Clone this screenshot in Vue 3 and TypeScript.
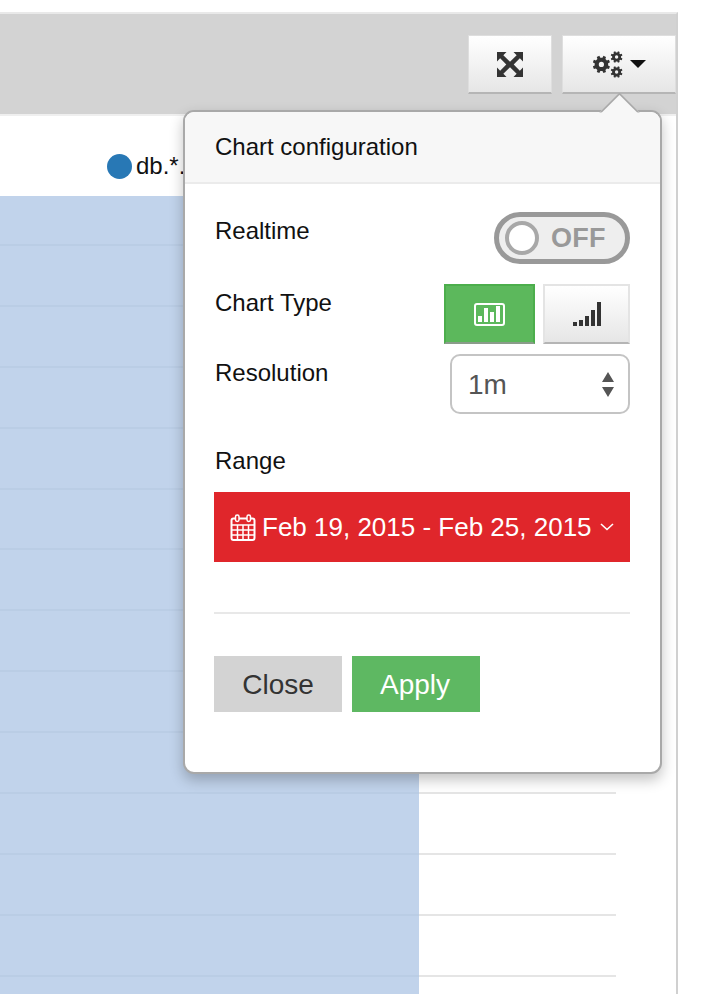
<script setup lang="ts">
const gridRows = 13;

// outline of a cog, teeth is the tooth count
function cog(cx: number, cy: number, outer: number, inner: number, hole: number, teeth: number): string {
  const pts: string[] = [];
  const step = (Math.PI * 2) / teeth;
  for (let i = 0; i < teeth; i++) {
    const a = i * step + step / 2;
    const corners: [number, number][] = [
      [inner, a - step * 0.3],
      [outer, a - step * 0.2],
      [outer, a + step * 0.2],
      [inner, a + step * 0.3],
    ];
    for (const [r, t] of corners) {
      pts.push(`${(cx + r * Math.cos(t)).toFixed(2)} ${(cy + r * Math.sin(t)).toFixed(2)}`);
    }
  }
  const ring = `M${cx - hole} ${cy}a${hole} ${hole} 0 1 0 ${hole * 2} 0a${hole} ${hole} 0 1 0 ${-hole * 2} 0Z`;
  return `M${pts.join("L")}Z${ring}`;
}

const gearPath = [
  cog(8.4, 13.4, 8.8, 6.8, 2.6, 8),
  cog(23.6, 6, 6, 4.5, 1.7, 8),
  cog(23.6, 21, 6, 4.5, 1.7, 8),
].join("");

const signalBars = [
  { x: 0, h: 4 },
  { x: 6, h: 6 },
  { x: 12, h: 10 },
  { x: 18, h: 16 },
  { x: 24, h: 24 },
];
</script>

<template>
  <div class="page">
    <section class="panel">
      <header class="panel-head">
        <button class="tool tool-expand" type="button" aria-label="Fullscreen">
          <svg width="26" height="25" viewBox="0 0 26 25">
            <path d="M0 0H9.500L6.350 3.150L13 9.800L19.650 3.150L16.500 0H26V9.500L22.850 6.350L16.700 12.500L22.850 18.650L26 15.500V25H16.500L19.650 21.850L13 15.200L6.350 21.850L9.500 25H0V15.500L3.150 18.650L9.300 12.500L3.150 6.350L0 9.500Z" fill="#333" />
          </svg>
        </button>
        <button class="tool tool-gear" type="button" aria-label="Settings">
          <svg width="30" height="27" viewBox="0 0 30 27">
            <path :d="gearPath" fill="#333" fill-rule="evenodd" />
          </svg>
          <span class="caret"></span>
        </button>
      </header>

      <div class="chart-legend">
        <span class="legend-dot"></span>
        <span>db.*.</span>
      </div>
      <div class="chart">
        <div class="bar">
          <div v-for="n in gridRows" :key="n" class="grid-row"></div>
        </div>
        <div v-for="n in gridRows" :key="n" class="grid-row"></div>
      </div>

      <aside class="popover">
        <div class="arrow"></div>
        <h3 class="pop-title">Chart configuration</h3>
        <div class="pop-body">
          <div class="row row-realtime">
            <label>Realtime</label>
            <div class="switch">
              <span class="knob"></span>
              <span class="off">OFF</span>
            </div>
          </div>
          <div class="row row-type">
            <label>Chart Type</label>
            <div class="type-group">
              <button class="type-btn on" type="button" aria-label="Bars">
                <svg width="31" height="23" viewBox="0 0 31 23">
                  <rect x="1" y="1" width="29" height="21" rx="2" fill="none" stroke="#fff" stroke-width="2" />
                  <path d="M4 13h4v6H4zM10 5h4v14h-4zM16 9h4v10h-4zM22 3h4v16h-4z" fill="#fff" />
                </svg>
              </button>
              <button class="type-btn" type="button" aria-label="Signal">
                <svg width="28" height="24" viewBox="0 0 28 24">
                  <rect v-for="b in signalBars" :key="b.x" :x="b.x" :y="24 - b.h" width="4" :height="b.h" fill="#333" />
                </svg>
              </button>
            </div>
          </div>
          <div class="row row-res">
            <label>Resolution</label>
            <div class="select">
              <span>1m</span>
              <svg width="12" height="25" viewBox="0 0 12 25">
                <path d="M6 0l6 10H0zM0 15h12L6 25z" fill="#555" />
              </svg>
            </div>
          </div>
          <label class="range-label">Range</label>
          <div class="range">
            <svg width="26" height="27" viewBox="0 0 26 27">
              <rect x="1.500" y="4.500" width="23" height="21.500" rx="2" fill="none" stroke="#fff" stroke-width="2" />
              <path d="M2 11h22M2 16h22M2 21h22M7.500 11V26M13 11V26M18.500 11V26" stroke="#fff" stroke-width="1.500" />
              <rect x="5.500" y="1" width="3.500" height="6.500" rx="1.700" fill="#e0262b" stroke="#fff" stroke-width="1.500" />
              <rect x="17" y="1" width="3.500" height="6.500" rx="1.700" fill="#e0262b" stroke="#fff" stroke-width="1.500" />
            </svg>
            <span>Feb 19, 2015 - Feb 25, 2015</span>
            <svg width="14" height="8" viewBox="0 0 14 8">
              <path d="M1 1l6 5.500L13 1" fill="none" stroke="#fff" stroke-width="1.600" />
            </svg>
          </div>
          <hr class="rule" />
          <div class="actions">
            <button class="act act-close" type="button">Close</button>
            <button class="act act-apply" type="button">Apply</button>
          </div>
        </div>
      </aside>
    </section>
  </div>
</template>

<style>
html, body { margin: 0; background: #fff; }
</style>

<style scoped>
.page {
  width: 720px;
  height: 994px;
  overflow: hidden;
  font-family: "Liberation Sans", Arial, sans-serif;
  color: #111;
  padding-top: 12px;
  box-sizing: border-box;
}
.panel {
  position: relative;
  width: 678px;
  height: 982px;
  box-sizing: border-box;
  border-top: 2px solid #e9e9e9;
  border-right: 2px solid #d0d0d0;
}
.panel-head {
  height: 100px;
  box-sizing: border-box;
  background: #d3d3d3;
  display: flex;
  justify-content: flex-end;
  gap: 10px;
  padding: 21px 0 0 0;
}
.tool {
  height: 59px;
  box-sizing: border-box;
  border: 1px solid #dedede;
  border-bottom: 2px solid #b5b5b5;
  background: linear-gradient(#fff, #e6e6e6);
  display: flex;
  align-items: center;
  justify-content: center;
  padding: 0;
}
.tool-expand { width: 84px; }
.tool-gear { width: 114px; gap: 7px; }
.caret {
  width: 0;
  height: 0;
  border-left: 8px solid transparent;
  border-right: 8px solid transparent;
  border-top: 8px solid #111;
}
.chart-legend {
  height: 82px;
  box-sizing: border-box;
  border-top: 2px solid #efefef;
  display: flex;
  align-items: center;
  padding: 20px 0 0 107px;
  font-size: 24px;
  gap: 4px;
}
.legend-dot {
  width: 25px;
  height: 25px;
  border-radius: 50%;
  background: #2878b5;
}
.chart {
  position: relative;
  width: 616px;
}
.bar {
  position: absolute;
  left: 0;
  top: 0;
  width: 419px;
  height: 800px;
  overflow: hidden;
  background: #c1d3eb;
}
.grid-row {
  height: 60.900px;
  box-sizing: border-box;
  border-bottom: 2px solid #e5e5e5;
}
.chart > .grid-row:nth-child(2),
.bar > .grid-row:first-child { height: 50px; }
.bar > .grid-row { border-bottom-color: #bacde5; }
.popover {
  position: absolute;
  left: 183px;
  top: 96px;
  width: 479px;
  height: 664px;
  box-sizing: border-box;
  background: #fff;
  border: 2px solid #a9a9a9;
  border-radius: 11px;
  box-shadow: 0 6px 14px rgba(0, 0, 0, 0.24);
}
.arrow {
  position: absolute;
  right: 26px;
  top: -14px;
  width: 27px;
  height: 27px;
  background: #f7f7f7;
  border-left: 2px solid #a9a9a9;
  border-top: 2px solid #a9a9a9;
  transform: rotate(45deg);
  clip-path: polygon(0 0, 100% 0, 0 100%);
}
.pop-title {
  margin: 0;
  height: 72px;
  box-sizing: border-box;
  padding: 0 30px;
  background: #f7f7f7;
  border-bottom: 2px solid #ebebeb;
  border-radius: 9px 9px 0 0;
  font-size: 24px;
  font-weight: 400;
  line-height: 70px;
}
.pop-body {
  padding: 28px 30px 0 29px;
}
label {
  font-size: 24px;
  line-height: 38px;
  padding-left: 1px;
}
.row {
  display: flex;
  justify-content: space-between;
}
.row-realtime { height: 72px; }
.switch {
  width: 136px;
  height: 52px;
  box-sizing: border-box;
  border: 5px solid #999;
  border-radius: 26px;
  background: #eee;
  display: flex;
  align-items: center;
  padding-left: 6px;
  gap: 12px;
}
.knob {
  width: 34px;
  height: 34px;
  box-sizing: border-box;
  border: 4px solid #a8a8a8;
  border-radius: 50%;
  background: #fff;
}
.off {
  color: #999;
  font-size: 27px;
  font-weight: 700;
  letter-spacing: 0.3px;
}
.row-type { height: 70px; }
.type-group { display: flex; gap: 8px; }
.type-btn {
  width: 87px;
  height: 60px;
  box-sizing: border-box;
  border: 2px solid #e4e4e4;
  border-bottom: 2px solid #b5b5b5;
  background: linear-gradient(#fff, #e6e6e6);
  display: flex;
  align-items: center;
  justify-content: center;
  padding: 0;
}
.type-btn.on {
  width: 91px;
  background: #5cb85c;
  border-color: #4cae4c;
  border-bottom-color: #8a9c8a;
}
.row-res { height: 88px; }
.select {
  width: 180px;
  height: 60px;
  box-sizing: border-box;
  border: 2px solid #c4c4c4;
  border-radius: 10px;
  display: flex;
  align-items: center;
  justify-content: space-between;
  padding: 2px 14px 0 16px;
  font-size: 28px;
  color: #555;
}
.select svg { margin-top: -2px; }
.range-label {
  display: block;
  margin-bottom: 12px;
}
.range {
  height: 70px;
  background: #e0262b;
  color: #fff;
  display: flex;
  align-items: center;
  padding-left: 16px;
  gap: 6px;
  font-size: 26px;
}
.range svg:last-child { margin-left: 2px; }
.rule {
  margin: 50px 0 42px;
  border: 0;
  border-top: 2px solid #e8e8e8;
}
.actions { display: flex; gap: 10px; }
.act {
  width: 128px;
  height: 56px;
  border: 0;
  padding: 2px 0 0;
  font: 28px "Liberation Sans", Arial, sans-serif;
}
.act-close { background: #d3d3d3; color: #333; }
.act-apply { background: #5eb862; color: #fff; padding-right: 2px; }
</style>
